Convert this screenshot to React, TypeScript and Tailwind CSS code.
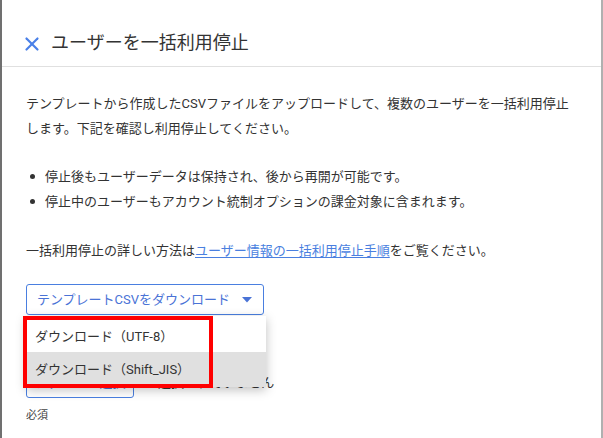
import { X } from 'lucide-react'

const font = { fontFamily: 'Roboto, "Noto Sans CJK JP", sans-serif' }

function DownloadMenu() {
  return (
    <div className="absolute left-0 top-full z-10 mt-[1px] w-[240px] bg-white shadow-[0_3px_10px_rgba(0,0,0,0.25)]">
      <div className="flex h-[36px] items-center pl-[9px] pt-[4px] text-[13px] text-[#333]">ダウンロード（UTF-8）</div>
      <div className="flex h-[35px] items-center bg-[#e0e0e0] pl-[9px] text-[13px] text-[#333]">ダウンロード（Shift_JIS）</div>
      {/* annotation box */}
      <div className="pointer-events-none absolute -left-[3px] top-0 h-[72px] w-[190px] border-4 border-[#ff0000]" />
    </div>
  )
}

export default function App() {
  return (
    <div className="flex h-[438px] w-[603px] overflow-hidden bg-white" style={font}>
      <div className="w-[2px] shrink-0 bg-[#707070]" />
      <div className="flex min-w-0 flex-1 flex-col">
        {/* Header */}
        <div className="flex h-[67px] shrink-0 items-end gap-[8px] border-b border-[#e0e0e0] pb-[11px] pl-[19px]">
          <X className="h-[22px] w-[22px] text-[#4a80e8]" strokeWidth={2.4} />
          <h1 className="text-[18px] leading-[24px] text-[#333]">ユーザーを一括利用停止</h1>
        </div>

        {/* Body */}
        <div className="flex flex-col px-[24px] pt-[24px] text-[13px] leading-[25px] text-[#333]">
          <p>
            テンプレートから作成したCSVファイルをアップロードして、複数のユーザーを一括利用停止
            <br />
            します。下記を確認し利用停止してください。
          </p>
          <ul className="mt-[23px] flex flex-col">
            <li className="flex items-center gap-[10px] pl-[4px]">
              <span className="h-[5px] w-[5px] rounded-full bg-[#333]" />
              停止後もユーザーデータは保持され、後から再開が可能です。
            </li>
            <li className="flex items-center gap-[10px] pl-[4px]">
              <span className="h-[5px] w-[5px] rounded-full bg-[#333]" />
              停止中のユーザーもアカウント統制オプションの課金対象に含まれます。
            </li>
          </ul>
          <p className="mt-[24px]">
            一括利用停止の詳しい方法は
            <a className="text-[#4a7fe0] underline underline-offset-2" href="#">ユーザー情報の一括利用停止手順</a>
            をご覧ください。
          </p>

          <div className="relative mt-[21px] w-[238px]">
            <button className="flex h-[31px] w-[238px] items-center gap-[10px] rounded-[3px] border border-[#4a7fe0] pl-[10px] text-[13px] text-[#4a73d6]">
              テンプレートCSVをダウンロード
              <svg width="10" height="6" viewBox="0 0 10 6" className="ml-[2px]">
                <path d="M0 0h10L5 5.5z" fill="#4a73d6" />
              </svg>
            </button>
            <DownloadMenu />
          </div>

          <div className="mt-[52px] flex h-[31px] items-center gap-[24px]">
            <div className="flex h-[31px] w-[108px] items-center justify-center rounded-[3px] border border-[#4a7fe0] text-[13px] text-[#4a73d6]">
              ファイルを選択
            </div>
            <span className="text-[13px] text-[#333]">選択されていません</span>
          </div>
          <div className="mt-[11px] text-[11px] leading-[14px] text-[#444]">必須</div>
        </div>
      </div>
      <div className="w-[2px] shrink-0 bg-[#b0b0b0]" />
    </div>
  )
}
